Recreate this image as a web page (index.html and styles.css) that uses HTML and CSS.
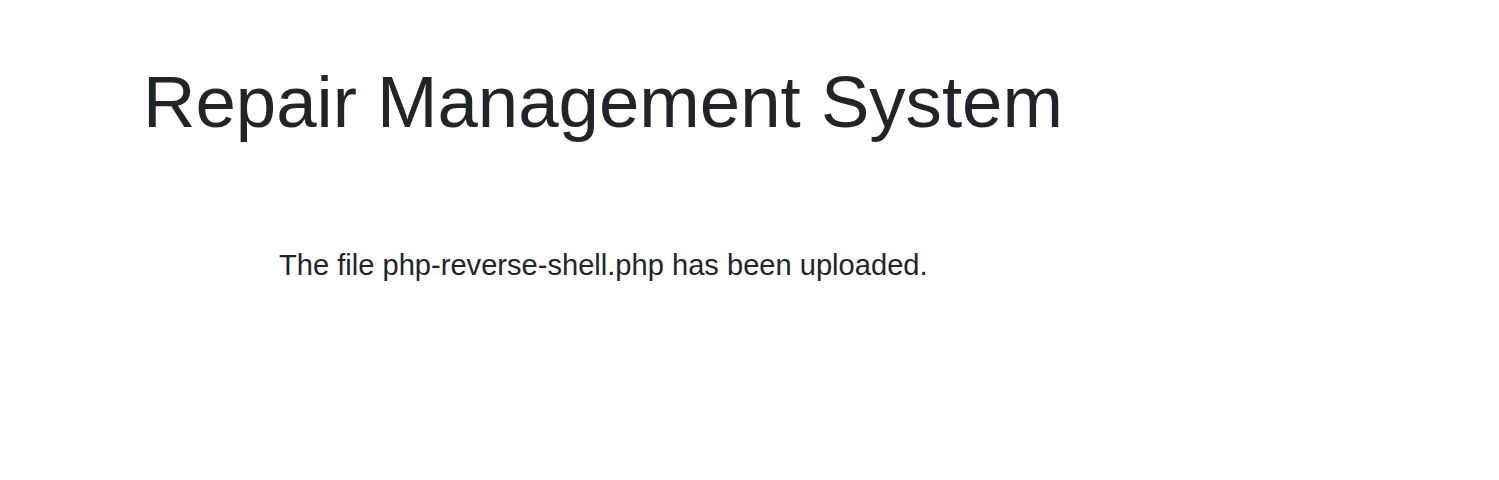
FILE: index.html
```html
<!DOCTYPE html>
<html lang="en">
<head>
<meta charset="utf-8">
<title>Repair Management System</title>
<link rel="stylesheet" href="styles.css">
</head>
<body>
<main class="page">
  <h1 class="title">Repair Management System</h1>
  <p class="message">The file php-reverse-shell.php has been uploaded.</p>
</main>
</body>
</html>
```

FILE: styles.css
```css
html, body {
  margin: 0;
  padding: 0;
  background: #ffffff;
}
body {
  font-family: "Liberation Sans", Arial, Helvetica, sans-serif;
  color: #212529;
}
.page {
  display: flex;
  flex-direction: column;
  padding: 58px 0 0 143px;
}
.title {
  margin: 0;
  font-size: 72.6px;
  font-weight: 400;
  line-height: 1.2;
}
.message {
  margin: 103px 0 0 136px;
  font-size: 29.1px;
  line-height: 1.2;
}
```
